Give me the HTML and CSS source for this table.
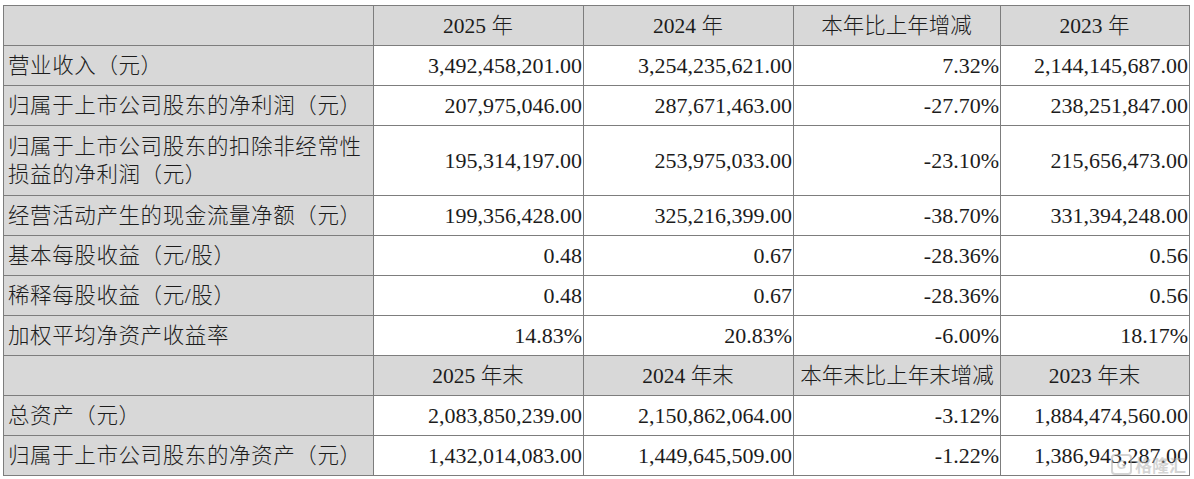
FILE: index.html
```html
<!DOCTYPE html>
<html lang="zh-CN">
<head>
<meta charset="utf-8">
<title>主要会计数据</title>
<link rel="stylesheet" href="styles.css">
</head>
<body>
<div class="wrap">
<table class="fin">
  <colgroup>
    <col class="c-label"><col class="c-num"><col class="c-num"><col class="c-chg"><col class="c-last">
  </colgroup>
  <tr class="head">
    <td class="label"></td><td>2025 年</td><td>2024 年</td><td>本年比上年增减</td><td>2023 年</td>
  </tr>
  <tr>
    <td class="label">营业收入（元）</td><td>3,492,458,201.00</td><td>3,254,235,621.00</td><td>7.32%</td><td>2,144,145,687.00</td>
  </tr>
  <tr>
    <td class="label">归属于上市公司股东的净利润（元）</td><td>207,975,046.00</td><td>287,671,463.00</td><td>-27.70%</td><td>238,251,847.00</td>
  </tr>
  <tr class="tall">
    <td class="label">归属于上市公司股东的扣除非经常性<br>损益的净利润（元）</td><td>195,314,197.00</td><td>253,975,033.00</td><td>-23.10%</td><td>215,656,473.00</td>
  </tr>
  <tr>
    <td class="label">经营活动产生的现金流量净额（元）</td><td>199,356,428.00</td><td>325,216,399.00</td><td>-38.70%</td><td>331,394,248.00</td>
  </tr>
  <tr>
    <td class="label">基本每股收益（元/股）</td><td>0.48</td><td>0.67</td><td>-28.36%</td><td>0.56</td>
  </tr>
  <tr>
    <td class="label">稀释每股收益（元/股）</td><td>0.48</td><td>0.67</td><td>-28.36%</td><td>0.56</td>
  </tr>
  <tr>
    <td class="label">加权平均净资产收益率</td><td>14.83%</td><td>20.83%</td><td>-6.00%</td><td>18.17%</td>
  </tr>
  <tr class="head">
    <td class="label"></td><td>2025 年末</td><td>2024 年末</td><td class="tight">本年末比上年末增减</td><td>2023 年末</td>
  </tr>
  <tr>
    <td class="label">总资产（元）</td><td>2,083,850,239.00</td><td>2,150,862,064.00</td><td>-3.12%</td><td>1,884,474,560.00</td>
  </tr>
  <tr>
    <td class="label">归属于上市公司股东的净资产（元）</td><td>1,432,014,083.00</td><td>1,449,645,509.00</td><td>-1.22%</td><td>1,386,943,287.00</td>
  </tr>
</table>
<div class="watermark"><span class="wm-g">G</span>格隆汇</div>
</div>
</body>
</html>
```
FILE: styles.css
```css
html, body {
  margin: 0;
  padding: 0;
  background: #ffffff;
}
.wrap {
  position: relative;
  width: 1194px;
  height: 479px;
  padding: 5px 0 0 3px;
  box-sizing: border-box;
}
.fin {
  border-collapse: collapse;
  table-layout: fixed;
  width: 1186px;
  font-family: "Liberation Serif", "Noto Sans CJK SC", serif;
  font-size: 22px;
  font-weight: 300;
  color: #1c1c1c;
}
.c-label { width: 370px; }
.c-num { width: 210px; }
.c-chg { width: 207px; }
.c-last { width: 189px; }
.fin td {
  border: 1px solid #7d7d7d;
  height: 39px;
  padding: 0 1px 0 0;
  text-align: right;
  vertical-align: middle;
  white-space: nowrap;
  line-height: 28px;
}
.fin tr.tall td { height: 69px; }
.fin td.label {
  background: #d8d8d8;
  text-align: left;
  padding: 0 0 0 4px;
  font-size: 21.5px;
  letter-spacing: 0.6px;
}
.fin tr.head td {
  background: #d8d8d8;
  text-align: center;
  font-size: 21.5px;
}
.fin tr.head td.tight {
  padding: 0;
}
.watermark {
  position: absolute;
  right: 8px;
  bottom: 2px;
  font-family: "Noto Sans CJK SC", sans-serif;
  font-size: 17px;
  font-weight: bold;
  color: rgba(170, 170, 170, 0.5);
  display: flex;
  align-items: center;
  gap: 3px;
  pointer-events: none;
}
.wm-g {
  display: inline-flex;
  align-items: center;
  justify-content: center;
  width: 17px;
  height: 17px;
  border: 2px solid rgba(170, 170, 170, 0.5);
  border-radius: 4px;
  font-size: 12px;
  font-family: "Liberation Sans", sans-serif;
}
```
